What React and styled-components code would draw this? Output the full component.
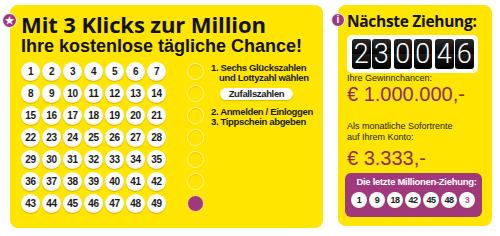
import React from 'react'
import styled, { createGlobalStyle } from 'styled-components'

const GlobalStyle = createGlobalStyle`
    html, body {
        margin: 0;
        padding: 0;
        background: #ffffff;
        font-family: "Liberation Sans", Arial, sans-serif;
    }
`

const YELLOW = '#ffe500'
const PURPLE = '#a0397c'
const WINE = '#8e2c5a'

const Page = styled.div`
    display: flex;
    align-items: flex-start;
    gap: 15px;
    padding: 5px 0 0 10px;
    width: 500px;
    height: 236px;
    box-sizing: border-box;
`

const Panel = styled.div`
    position: relative;
    flex: none;
    background: ${YELLOW};
    border-radius: 8px;
    box-sizing: border-box;
    width: ${p => p.$w}px;
    height: ${p => p.$h}px;
    padding: ${p => p.$pad};
`

const Badge = styled.div`
    position: absolute;
    left: ${p => p.$left}px;
    top: 8px;
    width: ${p => p.$size}px;
    height: ${p => p.$size}px;
    border-radius: 50%;
    background: ${PURPLE};
    border: 1.5px solid #ffffff;
    box-sizing: border-box;
    color: #ffffff;
    display: flex;
    align-items: center;
    justify-content: center;
    font-size: ${p => p.$font}px;
    font-weight: bold;
    line-height: 1;
`

const Title = styled.h1`
    margin: 0;
    font-family: "Open Sans", "Noto Sans", sans-serif;
    font-weight: 700;
    font-size: 22px;
    line-height: 24px;
    color: #111111;
    letter-spacing: -0.1px;
    white-space: nowrap;
`

const Subtitle = styled.h2`
    margin: 0;
    font-weight: bold;
    font-size: 18px;
    line-height: 20px;
    color: #111111;
    white-space: nowrap;
`

const Body = styled.div`
    display: flex;
    align-items: flex-start;
    margin-top: 6px;
`

const BallGrid = styled.div`
    display: grid;
    grid-template-columns: repeat(7, 19px);
    column-gap: 2px;
    row-gap: 3px;
`

const Ball = styled.div`
    flex: none;
    width: ${p => p.$size}px;
    height: ${p => p.$size}px;
    border-radius: 50%;
    background: radial-gradient(circle at 50% 38%, #ffffff 55%, #eeeeee 80%, #cfcfcf 100%);
    box-shadow: 0 1px 1px rgba(120, 90, 0, 0.35);
    display: flex;
    align-items: center;
    justify-content: center;
    font-size: ${p => p.$font}px;
    font-weight: bold;
    letter-spacing: -0.4px;
    color: ${p => (p.$extra ? '#c04c8a' : '#1a1a1a')};
`

const Slots = styled.div`
    display: flex;
    flex-direction: column;
    gap: 5px;
    margin-left: 21px;
    padding-top: 1px;
`

const Slot = styled.div`
    width: 17px;
    height: 17px;
    border-radius: 50%;
    box-sizing: border-box;
    border: 1.5px solid ${p => (p.$filled ? '#f6dfa8' : '#fff3a0')};
    background: ${p => (p.$filled ? PURPLE : YELLOW)};
    box-shadow: inset 0 1px 1px rgba(150, 120, 0, 0.25);
`

const Steps = styled.div`
    margin-left: 7px;
    display: flex;
    flex-direction: column;
    align-items: flex-start;
    font-size: 9.5px;
    font-weight: bold;
    line-height: 10px;
    letter-spacing: -0.35px;
    color: #1a1a1a;
`

const Step = styled.div`
    padding-left: 8px;
    text-indent: -8px;
    margin-top: ${p => p.$mt || 0}px;
`

const RandomButton = styled.button`
    margin: 5px 0 0 9px;
    width: 73px;
    height: 12px;
    padding: 0;
    border: none;
    border-radius: 6px;
    background: #ffffff;
    box-shadow: 0 1px 1px rgba(120, 90, 0, 0.3);
    font-family: inherit;
    font-size: 9.5px;
    font-weight: bold;
    letter-spacing: -0.35px;
    color: #1a1a1a;
    line-height: 12px;
`

const DrawTitle = styled.h2`
    margin: 0;
    font-family: "Open Sans", "Noto Sans", sans-serif;
    font-weight: 700;
    font-size: 15.5px;
    line-height: 20px;
    letter-spacing: -0.3px;
    color: #111111;
    white-space: nowrap;
`

const Counter = styled.div`
    margin-top: 4px;
    width: 131px;
    height: 38px;
    box-sizing: border-box;
    display: flex;
    align-items: center;
    gap: 1.5px;
    padding: 0 5px;
    background: #ffffff;
    border-radius: 5px;
`

const Digit = styled.div`
    flex: none;
    width: 18.5px;
    height: 30px;
    border-radius: 3px;
    background: linear-gradient(#2a2a2a, #050505 50%, #1c1c1c 50%, #000000);
    color: #ffffff;
    display: flex;
    align-items: center;
    justify-content: center;
    font-family: Roboto, "Liberation Sans", sans-serif;
    font-weight: 300;
    font-size: 27px;
    line-height: 1;
    margin-left: ${p => (p.$pairStart ? 1.5 : 0)}px;
`

const Small = styled.div`
    font-size: 9px;
    line-height: ${p => p.$lh || 11}px;
    color: #222222;
    margin-top: ${p => p.$mt || 0}px;
    white-space: nowrap;
`

const Amount = styled.div`
    font-size: 20px;
    line-height: 20px;
    color: ${WINE};
    margin-top: ${p => p.$mt || 0}px;
    white-space: nowrap;
`

const LastDraw = styled.div`
    margin: 5px 0 0 -2px;
    width: 137px;
    height: 44px;
    box-sizing: border-box;
    padding: 3px 0 0 6px;
    border-radius: 6px;
    background: ${PURPLE};
    display: flex;
    flex-direction: column;
    align-items: flex-start;
`

const LastDrawTitle = styled.div`
    align-self: center;
    font-size: 9.5px;
    line-height: 11px;
    font-weight: bold;
    letter-spacing: -0.3px;
    color: #ffffff;
    white-space: nowrap;
`

const LastBalls = styled.div`
    display: flex;
    gap: 2px;
    margin-top: 5px;
`

const numbers = Array.from({ length: 49 }, (_, i) => i + 1)
const lastDraw = [1, 9, 18, 42, 45, 48]

const App = () => {
    return (
        <>
            <GlobalStyle />
            <Page>
                <Panel $w={313} $h={223} $pad="7px 0 0 11px">
                    <Badge $left={-8} $size={15} $font={10}>★</Badge>
                    <Title>Mit 3 Klicks zur Million</Title>
                    <Subtitle>Ihre kostenlose tägliche Chance!</Subtitle>
                    <Body>
                        <BallGrid>
                            {numbers.map(n => (
                                <Ball key={n} $size={19} $font={10}>{n}</Ball>
                            ))}
                        </BallGrid>
                        <Slots>
                            {[0, 1, 2, 3, 4, 5, 6].map(i => (
                                <Slot key={i} $filled={i === 6} />
                            ))}
                        </Slots>
                        <Steps>
                            <Step $mt={1}>1. Sechs Glückszahlen<br />und Lottyzahl wählen</Step>
                            <RandomButton>Zufallszahlen</RandomButton>
                            <Step $mt={7}>2. Anmelden / Einloggen</Step>
                            <Step>3. Tippschein abgeben</Step>
                        </Steps>
                    </Body>
                </Panel>
                <Panel $w={154} $h={221} $pad="6px 0 0 9px">
                    <Badge $left={-7} $size={14} $font={10}>i</Badge>
                    <DrawTitle>Nächste Ziehung:</DrawTitle>
                    <Counter>
                        {['2', '3', '0', '0', '4', '6'].map((d, i) => (
                            <Digit key={i} $pairStart={i === 2 || i === 4}>{d}</Digit>
                        ))}
                    </Counter>
                    <Small $lh={10}>Ihre Gewinnchancen:</Small>
                    <Amount $mt={1}>€ 1.000.000,-</Amount>
                    <Small $mt={17}>Als monatliche Sofortrente<br />auf Ihrem Konto:</Small>
                    <Amount $mt={5}>€ 3.333,-</Amount>
                    <LastDraw>
                        <LastDrawTitle>Die letzte Millionen-Ziehung:</LastDrawTitle>
                        <LastBalls>
                            {lastDraw.map(n => (
                                <Ball key={n} $size={16} $font={9}>{n}</Ball>
                            ))}
                            <Ball $size={16} $font={9} $extra>3</Ball>
                        </LastBalls>
                    </LastDraw>
                </Panel>
            </Page>
        </>
    )
}

export default App
